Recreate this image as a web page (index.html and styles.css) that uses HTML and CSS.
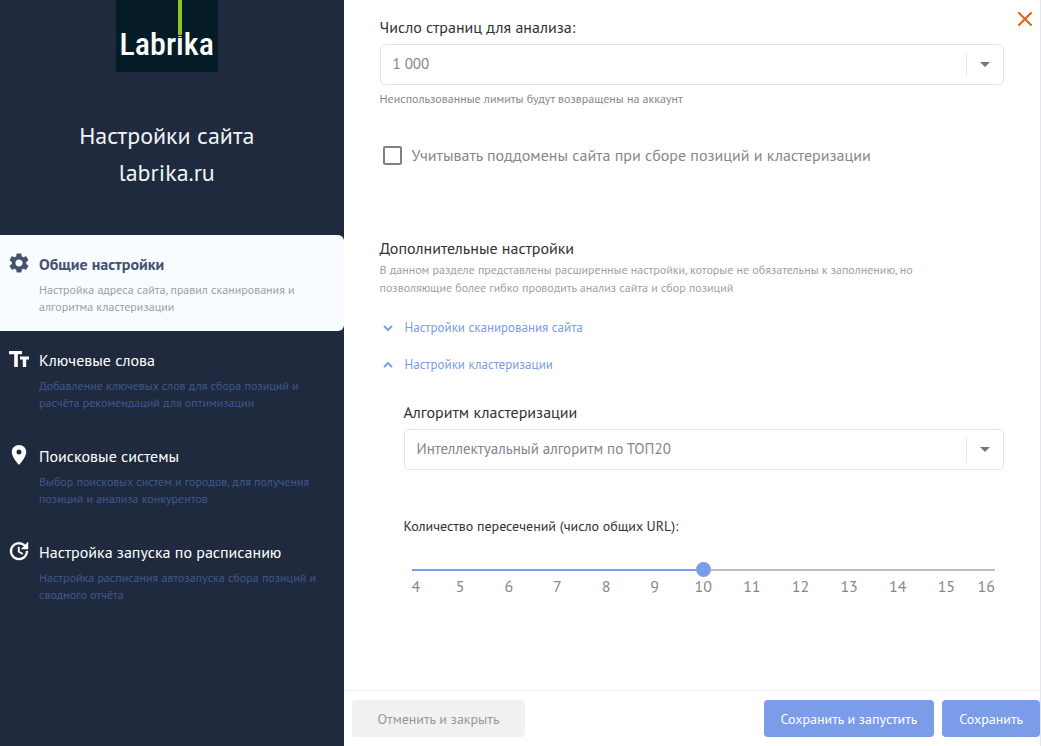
FILE: index.html
```html
<!DOCTYPE html>
<html lang="ru">
<head>
  <meta charset="UTF-8">
  <title>Настройки сайта labrika.ru</title>
  <link rel="stylesheet" href="styles.css">
</head>
<body>

  <aside class="sidebar">
    <header class="site">
      <div class="logo">
        <span class="logo-text">Labrika</span>
        <span class="logo-line"></span>
      </div>
      <h1>Настройки сайта<br>labrika.ru</h1>
    </header>

    <nav>
      <a href="#general" class="nav-item active">
        <svg class="nav-icon" viewBox="2 2 20 20"><path d="M19.14 12.94c.04-.3.06-.61.06-.94 0-.32-.02-.64-.07-.94l2.03-1.58c.18-.14.23-.41.12-.61l-1.92-3.32c-.12-.22-.37-.29-.59-.22l-2.39.96c-.5-.38-1.03-.7-1.62-.94l-.36-2.54c-.04-.24-.24-.41-.48-.41h-3.84c-.24 0-.43.17-.47.41l-.36 2.54c-.59.24-1.13.57-1.62.94l-2.39-.96c-.22-.08-.47 0-.59.22L2.74 8.87c-.12.21-.08.47.12.61l2.03 1.58c-.05.3-.09.63-.09.94s.02.64.07.94l-2.03 1.58c-.18.14-.23.41-.12.61l1.92 3.32c.12.22.37.29.59.22l2.39-.96c.5.38 1.03.7 1.62.94l.36 2.54c.05.24.24.41.48.41h3.84c.24 0 .44-.17.47-.41l.36-2.54c.59-.24 1.13-.56 1.62-.94l2.39.96c.22.08.47 0 .59-.22l1.92-3.32c.12-.22.07-.47-.12-.61l-2.01-1.58zM12 15.6c-1.98 0-3.6-1.62-3.6-3.6s1.62-3.6 3.6-3.6 3.6 1.62 3.6 3.6-1.62 3.6-3.6 3.6z"/></svg>
        <span class="nav-title">Общие настройки</span>
        <span class="nav-text">Настройка адреса сайта, правил сканирования и алгоритма кластеризации</span>
      </a>
      <a href="#keywords" class="nav-item">
        <svg class="nav-icon" viewBox="0 0 20 20"><path d="M0 2h13v3.200H8.800V18H5.200V5.200H0zM11 7.500h9v3h-2.800V18h-3.400v-7.500H11z"/></svg>
        <span class="nav-title">Ключевые слова</span>
        <span class="nav-text">Добавление ключевых слов для сбора позиций и расчёта рекомендаций для оптимизации</span>
      </a>
      <a href="#search" class="nav-item">
        <svg class="nav-icon" viewBox="0 0 24 24"><path d="M12 0C7.200 0 3.300 3.800 3.300 8.500 3.300 14.800 12 24 12 24s8.700-9.200 8.700-15.500C20.700 3.800 16.800 0 12 0zm0 11.500a3 3 0 1 1 0-6 3 3 0 0 1 0 6z"/></svg>
        <span class="nav-title">Поисковые системы</span>
        <span class="nav-text">Выбор поисковых систем и городов, для получения позиций и анализа конкурентов</span>
      </a>
      <a href="#schedule" class="nav-item">
        <svg class="nav-icon" viewBox="2 2 20 20"><path d="M21 10.120h-6.780l2.740-2.820c-2.730-2.700-7.150-2.800-9.880-.1-2.730 2.710-2.730 7.080 0 9.790s7.150 2.710 9.880 0C18.320 15.650 19 14.080 19 12.100h2c0 1.980-.88 4.550-2.640 6.290-3.510 3.480-9.210 3.480-12.720 0-3.500-3.470-3.530-9.110-.02-12.580s9.140-3.470 12.650 0L21 3v7.120zM12.500 8v4.250l3.500 2.080-.72 1.210L11 13V8h1.500z" stroke="currentColor" stroke-width=".4"/></svg>
        <span class="nav-title">Настройка запуска по расписанию</span>
        <span class="nav-text">Настройка расписания автозапуска сбора позиций и сводного отчёта</span>
      </a>
    </nav>
  </aside>

  <main>
    <button class="close" type="button" aria-label="Закрыть">
      <svg viewBox="0 0 14 14"><path d="M1 1l12 12M13 1L1 13"/></svg>
    </button>

    <form class="settings" id="settings">
      <label class="label" for="pages">Число страниц для анализа:</label>
      <div class="select">
        <select id="pages">
          <option>1 000</option>
        </select>
        <span class="select-arrow"></span>
      </div>
      <p class="hint">Неиспользованные лимиты будут возвращены на аккаунт</p>

      <label class="check">
        <input type="checkbox">
        <span>Учитывать поддомены сайта при сборе позиций и кластеризации</span>
      </label>

      <h2>Дополнительные настройки</h2>
      <p class="note">В данном разделе представлены расширенные настройки, которые не обязательны к заполнению, но позволяющие более гибко проводить анализ сайта и сбор позиций</p>

      <button class="toggle" type="button">
        <svg viewBox="0 0 10 6"><path d="M1 1l4 4 4-4"/></svg>
        Настройки сканирования сайта
      </button>
      <button class="toggle" type="button">
        <svg viewBox="0 0 10 6"><path d="M1 5l4-4 4 4"/></svg>
        Настройки кластеризации
      </button>

      <div class="cluster">
        <label class="label" for="algorithm">Алгоритм кластеризации</label>
        <div class="select">
          <select id="algorithm">
            <option>Интеллектуальный алгоритм по ТОП20</option>
          </select>
          <span class="select-arrow"></span>
        </div>

        <label class="label label-range" for="common">Количество пересечений (число общих URL):</label>
        <div class="range">
          <input type="range" id="common" min="4" max="16" value="10">
          <div class="scale">
            <span>4</span><span>5</span><span>6</span><span>7</span><span>8</span><span>9</span><span>10</span><span>11</span><span>12</span><span>13</span><span>14</span><span>15</span><span>16</span>
          </div>
        </div>
      </div>
    </form>

    <footer>
      <button class="btn btn-cancel" type="button">Отменить и закрыть</button>
      <button class="btn" type="submit" form="settings">Сохранить и запустить</button>
      <button class="btn" type="submit" form="settings">Сохранить</button>
    </footer>
  </main>

</body>
</html>
```
FILE: styles.css
```css
* {
  margin: 0;
  padding: 0;
  box-sizing: border-box;
}

body {
  display: flex;
  min-height: 100vh;
  font-family: 'PT Sans', 'Noto Sans', sans-serif;
  color: #333;
  background: #fff;
}

button, select {
  font-family: inherit;
}

/* Sidebar */
.sidebar {
  width: 33%;
  flex-shrink: 0;
  background: #1f2a3e;
  color: #f2f3f5;
}

.site {
  display: flex;
  flex-direction: column;
  align-items: center;
  padding: 0 10px 44px 0;
}

.logo {
  position: relative;
  width: 102px;
  height: 72px;
  padding-top: 24px;
  background: #051c26;
  text-align: center;
}

.logo-line {
  position: absolute;
  top: 0;
  left: 61px;
  width: 6px;
  height: 36px;
  background: #8fc61e;
  border: solid #051c26;
  border-width: 0 1px 1px;
}

.logo-text {
  display: block;
  font-family: 'Roboto Condensed', 'Liberation Sans Narrow', Roboto, sans-serif;
  font-size: 32px;
  font-weight: 500;
  line-height: 40px;
  color: #fff;
}

h1 {
  margin-top: 45px;
  font-size: 24px;
  font-weight: normal;
  line-height: 37px;
  text-align: center;
}

.nav-item {
  display: grid;
  grid-template-columns: 20px 1fr;
  column-gap: 10px;
  row-gap: 6px;
  padding: 18px 10px 16px 9px;
  color: #fff;
  text-decoration: none;
}

.nav-icon {
  width: 20px;
  height: 20px;
  fill: currentColor;
}

.nav-title {
  font-size: 16px;
  line-height: 22px;
}

.nav-text {
  grid-column: 2;
  font-size: 12px;
  line-height: 17px;
  color: #42578c;
}

.active {
  background: #f8fbff;
  border-radius: 0 6px 6px 0;
  color: #46536f;
}

.active .nav-title {
  font-weight: bold;
}

.active .nav-text {
  color: #a0a0a0;
}

/* Settings form */
main {
  display: flex;
  flex-direction: column;
  flex: 1;
  position: relative;
  border-right: 1px solid #e4e5ea;
}

.close {
  position: absolute;
  top: 9px;
  right: 5px;
  width: 20px;
  height: 20px;
  border: none;
  background: none;
  cursor: pointer;
}

.close svg {
  display: block;
  width: 14px;
  height: 14px;
  margin: 3px;
  fill: none;
  stroke: #e2620f;
  stroke-width: 2;
  stroke-linecap: round;
}

.settings {
  flex: 1;
  padding: 16px 36px 0;
}

.label {
  display: block;
  font-size: 16px;
  line-height: 22px;
}

.select {
  position: relative;
  margin-top: 6px;
}

.select select {
  display: block;
  width: 100%;
  height: 41px;
  padding: 0 50px 2px 12px;
  border: 1px solid #e2e2ea;
  border-radius: 5px;
  background: #fff;
  font-size: 15px;
  color: #81868f;
  appearance: none;
}

.select-arrow {
  display: flex;
  align-items: center;
  justify-content: center;
  position: absolute;
  top: 8px;
  right: 1px;
  width: 37px;
  height: 25px;
  border-left: 1px solid #e8e8f0;
  pointer-events: none;
}

.select-arrow::before {
  content: "";
  border: 5px solid transparent;
  border-top-color: #777;
  border-bottom: none;
}

.hint {
  margin-top: 5px;
  font-size: 12px;
  line-height: 18px;
  color: #888;
}

.check {
  display: flex;
  align-items: center;
  gap: 10px;
  margin-top: 36px;
  padding-left: 3px;
  font-size: 16px;
  line-height: 22px;
  color: #888;
}

.check input {
  width: 19px;
  height: 19px;
  border: 2px solid #808080;
  border-radius: 2px;
  appearance: none;
}

h2 {
  margin-top: 70px;
  font-size: 16px;
  font-weight: normal;
  line-height: 24px;
}

.note {
  max-width: 570px;
  margin-top: 1px;
  font-size: 12px;
  line-height: 18px;
  color: #a0a0a0;
}

.toggle {
  display: flex;
  align-items: center;
  gap: 12px;
  margin-top: 19px;
  padding-left: 3px;
  border: none;
  background: none;
  font-size: 13px;
  line-height: 18px;
  color: #7b9ce8;
  cursor: pointer;
}

.toggle svg {
  width: 10px;
  height: 6px;
  fill: none;
  stroke: currentColor;
  stroke-width: 2;
}

.note + .toggle {
  margin-top: 22px;
}

.cluster {
  padding: 27px 0 0 24px;
}

.label-range {
  margin-top: 45px;
  font-size: 14px;
}

.range {
  padding: 0 9px 0 8px;
  margin-top: 25px;
}

.range input {
  display: block;
  width: 100%;
  height: 15px;
  background: linear-gradient(to right, #7b9ce8 50%, #bdbdbd 50%) center / 100% 2px no-repeat;
  appearance: none;
}

.range input::-webkit-slider-thumb {
  width: 15px;
  height: 15px;
  border-radius: 50%;
  background: #7b9ce8;
  appearance: none;
}

.scale {
  display: grid;
  grid-template-columns: 1fr repeat(11, 2fr) 1fr;
  font-size: 16px;
  line-height: 18px;
  text-align: center;
  color: #888;
}

.scale span:first-child {
  text-align: left;
}

.scale span:last-child {
  text-align: right;
}

/* Buttons */
footer {
  display: flex;
  gap: 8px;
  padding: 9px 0 9px 8px;
  border-top: 1px solid #f0f3fa;
}

.btn {
  height: 37px;
  padding: 0 17px;
  border: none;
  border-radius: 4px;
  background: #7b9ce8;
  font-size: 14px;
  color: #fff;
  cursor: pointer;
}

.btn-cancel {
  margin-right: auto;
  padding: 0 26px;
  background: #f1f1f1;
  color: #999;
}
```
